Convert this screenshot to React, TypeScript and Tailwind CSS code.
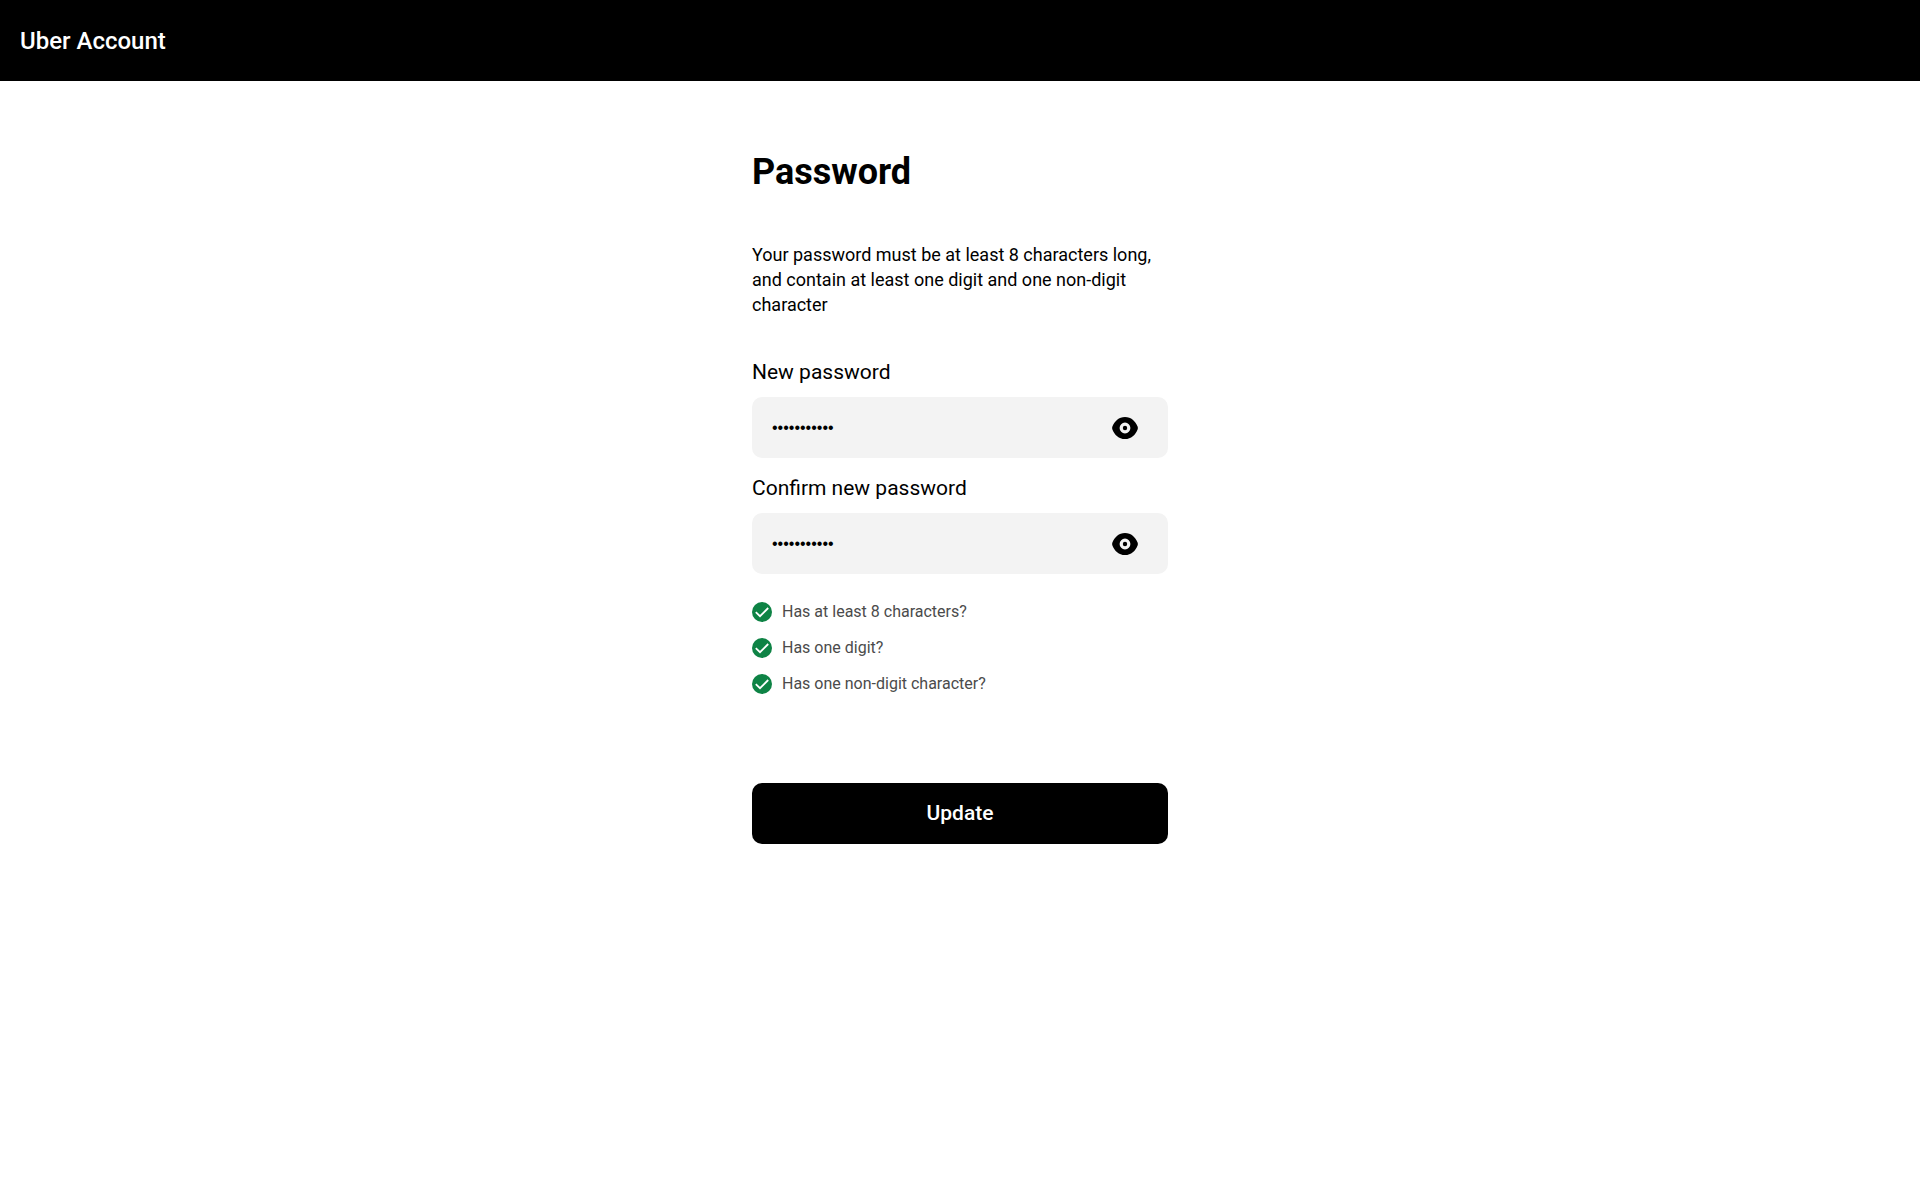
import { useState } from 'react'

function EyeIcon() {
  return (
    <svg viewBox="0 0 26 22" className="w-[26px] h-[22px]" aria-hidden="true">
      <path
        fillRule="evenodd"
        fill="#000"
        d="M13 0C6.8 0 2.6 4.1.4 9.6a4 4 0 0 0 0 2.8C2.6 17.900 6.800 22 13 22s10.400-4.100 12.600-9.600a4 4 0 0 0 0-2.800C23.400 4.100 19.200 0 13 0Zm0 5.600a5.400 5.400 0 1 1 0 10.800 5.400 5.400 0 0 1 0-10.800Z"
      />
      <circle cx="13" cy="11" r="2.200" fill="#000" />
    </svg>
  )
}

function CheckIcon() {
  return (
    <svg viewBox="0 0 20 20" className="w-5 h-5 shrink-0" aria-hidden="true">
      <circle cx="10" cy="10" r="10" fill="#0e8345" />
      <path d="M3.800 10.200 8 14.200 16.200 6" fill="none" stroke="#fff" strokeWidth="1.800" />
    </svg>
  )
}

type PasswordFieldProps = {
  id: string
  label: string
  value: string
  onChange: (value: string) => void
}

function PasswordField({ id, label, value, onChange }: PasswordFieldProps) {
  const [visible, setVisible] = useState(false)

  return (
    <div>
      <label htmlFor={id} className="block text-[21px] leading-6">{label}</label>
      <div className="mt-[13px] flex items-center h-[61px] rounded-[10px] bg-[#f3f3f3] pr-[30px]">
        <input
          id={id}
          type={visible ? 'text' : 'password'}
          value={value}
          autoComplete="new-password"
          className="flex-1 min-w-0 h-full bg-transparent pl-5 font-['Liberation_Sans',sans-serif] text-base outline-none"
          onChange={(e) => onChange(e.target.value)}
        />
        <button type="button" aria-label="Toggle password visibility" className="cursor-pointer" onClick={() => setVisible(!visible)}>
          <EyeIcon />
        </button>
      </div>
    </div>
  )
}

export default function App() {
  const [password, setPassword] = useState('password123')
  const [confirmPassword, setConfirmPassword] = useState('password123')

  const rules = [
    'Has at least 8 characters?',
    'Has one digit?',
    'Has one non-digit character?',
  ]

  const handleSubmit = (e: React.FormEvent) => {
    e.preventDefault()
  }

  return (
    <div className="min-h-screen bg-white text-black font-['Roboto',sans-serif]">
      <header className="flex items-center h-[81px] px-5 bg-black text-white">
        <span className="text-2xl font-medium">Uber Account</span>
      </header>

      <main className="w-full max-w-[416px] mx-auto pt-[69px]">
        <h1 className="text-4xl leading-[44px] font-bold">Password</h1>
        <p className="mt-12 text-lg leading-[25px]">
          Your password must be at least 8 characters long, and contain at least one digit and one non-digit character
        </p>

        <form onSubmit={handleSubmit} className="mt-[43px]">
          <div className="flex flex-col gap-[18px]">
            <PasswordField id="new-password" label="New password" value={password} onChange={setPassword} />
            <PasswordField id="confirm-password" label="Confirm new password" value={confirmPassword} onChange={setConfirmPassword} />
          </div>

          <ul className="mt-[26px] flex flex-col gap-3 text-base leading-6 text-[#4b4b4b]">
            {rules.map((rule) => (
              <li key={rule} className="flex items-center gap-[10px]">
                <CheckIcon />
                {rule}
              </li>
            ))}
          </ul>

          <button className="mt-[87px] w-full h-[61px] rounded-[10px] bg-black text-white text-[21px] font-medium cursor-pointer">
            Update
          </button>
        </form>
      </main>
    </div>
  )
}
